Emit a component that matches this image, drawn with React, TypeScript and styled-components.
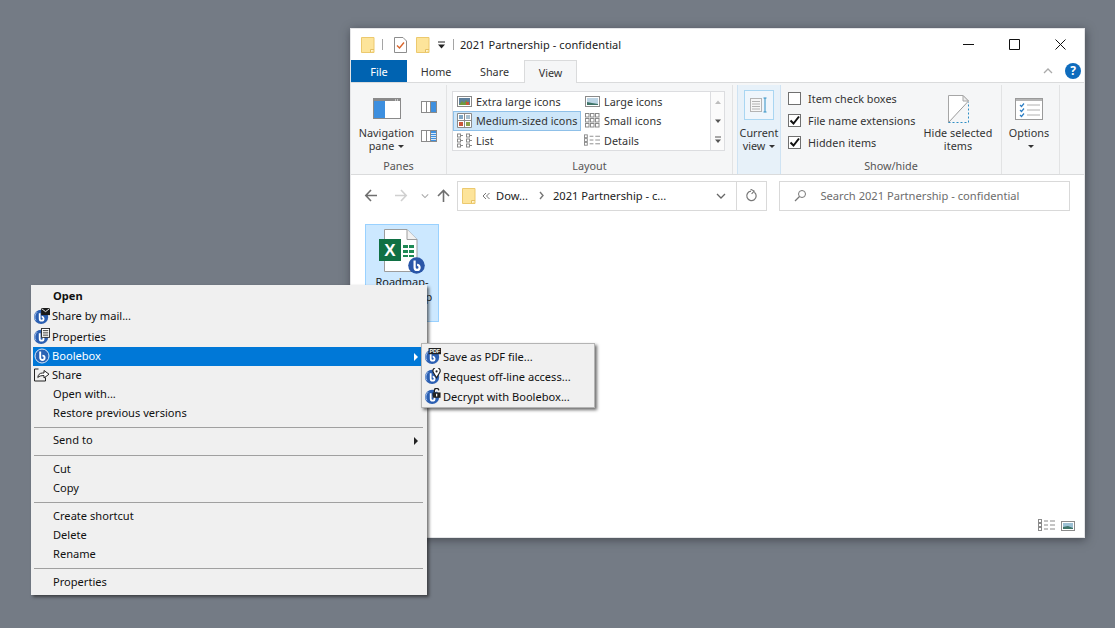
import React from 'react';
import styled, { createGlobalStyle } from 'styled-components';

const GlobalStyle = createGlobalStyle`
  html, body { margin: 0; padding: 0; background: #747b85; }
  body { font-family: "Noto Sans", "Open Sans", sans-serif; font-size: 11px; color: #1e1e1e; }
  * { box-sizing: border-box; }
`;

const Desktop = styled.div`
  position: relative;
  width: 1115px;
  height: 628px;
  overflow: hidden;
  background: #747b85;
`;

const ExplorerWindow = styled.div`
  position: absolute;
  left: 350px;
  top: 28px;
  width: 735px;
  height: 510px;
  display: flex;
  flex-direction: column;
  background: #fff;
  border: 1px solid #e4e5e7;
  box-shadow: 1px 2px 9px rgba(40, 44, 50, 0.6);
`;

const TitleBar = styled.div`
  height: 31px;
  display: flex;
  align-items: center;
  padding-left: 10px;
`;

const QuickSlot = styled.div<{ $ml: number }>`
  margin-left: ${(p) => p.$ml}px;
  display: flex;
  align-items: center;
`;

const TitleSep = styled.div<{ $ml: number }>`
  width: 1px;
  height: 11px;
  background: #a5a5a5;
  margin-left: ${(p) => p.$ml}px;
`;

const TitleText = styled.div`
  margin-left: 6px;
  font-size: 11px;
  color: #222;
  letter-spacing: 0.08px;
`;

const CaptionButtons = styled.div`
  margin-left: auto;
  display: flex;
  margin-right: 1px;
`;

const CaptionButton = styled.div`
  width: 46px;
  height: 31px;
  display: flex;
  align-items: center;
  justify-content: center;
`;

const TabRow = styled.div`
  height: 23px;
  display: flex;
  align-items: stretch;
  position: relative;
  z-index: 1;
  border-bottom: 1px solid #dadbdc;
`;

const FileTab = styled.div`
  width: 56px;
  display: flex;
  align-items: center;
  justify-content: center;
  background: #0063b1;
  color: #fff;
  font-size: 11px;
`;

const Tab = styled.div<{ $w: number; $active?: boolean }>`
  width: ${(p) => p.$w}px;
  display: flex;
  align-items: center;
  justify-content: center;
  font-size: 10.8px;
  color: #333;
  ${(p) =>
    p.$active &&
    `
    background: #f5f6f7;
    border: 1px solid #dadbdc;
    border-bottom: none;
    margin-bottom: -1px;
  `}
`;

const TabEnd = styled.div`
  margin-left: auto;
  display: flex;
  align-items: center;
  gap: 12px;
  padding-right: 3px;
`;

const HelpBadge = styled.div`
  width: 16px;
  height: 16px;
  border-radius: 50%;
  background: #0f6cbd;
  color: #fff;
  font-weight: 700;
  font-size: 12px;
  line-height: 16px;
  text-align: center;
`;

const Ribbon = styled.div`
  height: 92px;
  display: flex;
  background: #f5f6f7;
  border-bottom: 1px solid #dadbdc;
  padding: 2px 0 0;
`;

const Group = styled.div<{ $w: number; $last?: boolean }>`
  width: ${(p) => p.$w}px;
  display: flex;
  flex-direction: column;
  ${(p) => !p.$last && 'border-right: 1px solid #e2e3e4;'}
`;

const GroupBody = styled.div`
  flex: 1;
  display: flex;
  min-height: 0;
`;

const GroupLabel = styled.div`
  height: 17px;
  line-height: 17px;
  text-align: center;
  font-size: 10.8px;
  color: #555;
`;

const LargeButton = styled.div<{ $w: number }>`
  width: ${(p) => p.$w}px;
  display: flex;
  flex-direction: column;
  align-items: center;
  padding-top: 9px;
  font-size: 10.8px;
  line-height: 13px;
  text-align: center;
  color: #333;
  letter-spacing: 0.05px;
`;

const LargeButtonIcon = styled.div`
  height: 29px;
  display: flex;
  align-items: center;
  justify-content: center;
  margin-bottom: 3px;
`;

const Caret = styled.span`
  display: inline-block;
  width: 0;
  height: 0;
  margin-left: 4px;
  vertical-align: 2px;
  border-left: 3px solid transparent;
  border-right: 3px solid transparent;
  border-top: 3px solid #333;
`;

const PaneToggles = styled.div`
  display: flex;
  flex-direction: column;
  gap: 17px;
  padding-top: 16px;
  margin-left: -1px;
`;

const Gallery = styled.div`
  margin: 6px 0 0 5px;
  width: 259px;
  height: 60px;
  background: #fff;
  border: 1px solid #dcdde0;
  display: grid;
  grid-template-columns: 128px 1fr;
  grid-template-rows: repeat(3, 1fr);
`;

const GalleryItem = styled.div<{ $selected?: boolean }>`
  display: flex;
  align-items: center;
  gap: 4px;
  padding-left: 3px;
  font-size: 10.8px;
  color: #333;
  letter-spacing: 0.05px;
  white-space: nowrap;
  ${(p) => p.$selected && 'background: #cde6f9; border: 1px solid #8fc0e8; padding-left: 2px;'}
`;

const GalleryIcon = styled.div`
  width: 16px;
  display: flex;
  align-items: center;
  justify-content: center;
  flex: none;
`;

const GalleryScroll = styled.div`
  margin-top: 6px;
  width: 14px;
  height: 60px;
  background: #fbfbfb;
  border: 1px solid #dcdde0;
  border-left: none;
  display: flex;
  flex-direction: column;
`;

const ScrollCell = styled.div`
  height: 20px;
  display: flex;
  align-items: center;
  justify-content: center;
`;

const CurrentView = styled.div`
  width: 44px;
  margin-left: 4px;
  display: flex;
  flex-direction: column;
  align-items: center;
  padding-top: 5px;
  background: #e7f1f9;
  border: 1px solid #cfe3f3;
  border-width: 0 1px;
  font-size: 10.8px;
  line-height: 13px;
  text-align: center;
  color: #333;
  height: 89px;
`;

const CurrentViewIcon = styled.div`
  width: 30px;
  height: 30px;
  background: #eff6fc;
  border: 1px solid #a9d6f2;
  display: flex;
  align-items: center;
  justify-content: center;
  margin-bottom: 6px;
`;

const CheckColumn = styled.div`
  padding: 7px 0 0 7px;
  width: 139px;
  display: flex;
  flex-direction: column;
  gap: 9px;
`;

const CheckRow = styled.div`
  height: 13px;
  display: flex;
  align-items: center;
  gap: 7px;
  font-size: 10.8px;
  color: #333;
  letter-spacing: 0.05px;
  white-space: nowrap;
`;

const CheckBox = styled.div`
  width: 13px;
  height: 13px;
  background: #fff;
  border: 1px solid #707070;
  display: flex;
  align-items: center;
  justify-content: center;
`;

const AddressRow = styled.div`
  height: 41px;
  display: flex;
  align-items: center;
  padding: 0 14px 0 10px;
`;

const NavButtons = styled.div`
  width: 96px;
  display: flex;
  align-items: center;
`;

const NavCell = styled.div<{ $w: number }>`
  width: ${(p) => p.$w}px;
  display: flex;
  align-items: center;
  justify-content: center;
`;

const AddressBox = styled.div`
  width: 311px;
  height: 30px;
  border: 1px solid #d9d9d9;
  display: flex;
  align-items: center;
  padding-left: 4px;
  font-size: 11.15px;
  color: #222;
`;

const Crumb = styled.span<{ $ml: number }>`
  margin-left: ${(p) => p.$ml}px;
  white-space: nowrap;
  display: flex;
  align-items: center;
`;

const AddressEnd = styled.div`
  margin-left: auto;
  display: flex;
  align-items: center;
  height: 100%;
`;

const Dropdown = styled.div`
  width: 30px;
  display: flex;
  align-items: center;
  justify-content: center;
`;

const Refresh = styled.div`
  width: 30px;
  height: 100%;
  border-left: 1px solid #d9d9d9;
  display: flex;
  align-items: center;
  justify-content: center;
`;

const SearchBox = styled.div`
  margin-left: 12px;
  width: 291px;
  height: 30px;
  border: 1px solid #d9d9d9;
  display: flex;
  align-items: center;
  padding-left: 14px;
  gap: 13px;
  font-size: 11.15px;
  color: #6d6d6d;
`;

const FileArea = styled.div`
  flex: 1;
  padding: 8px 0 0 14px;
  position: relative;
`;

const FileTile = styled.div`
  width: 74px;
  height: 98px;
  background: #cce8ff;
  border: 1px solid #99d1ff;
  display: flex;
  flex-direction: column;
  align-items: center;
  padding-top: 3px;
  font-size: 11px;
  line-height: 15px;
  text-align: center;
  color: #222;
`;

const FileIconWrap = styled.div`
  height: 46px;
`;

const StatusIcons = styled.div`
  position: absolute;
  right: 9px;
  bottom: 5px;
  display: flex;
  align-items: center;
  gap: 6px;
`;

const ContextMenu = styled.div`
  position: absolute;
  left: 31px;
  top: 285px;
  width: 396px;
  height: 310px;
  padding: 1px 2px;
  background: #f0f0f0;
  box-shadow: 2px 2px 3px rgba(30, 30, 30, 0.65);
  font-size: 11.1px;
  color: #111;
`;

const SubMenu = styled.div`
  position: absolute;
  left: 421px;
  top: 343px;
  width: 174px;
  height: 65px;
  padding: 3px 1px;
  background: #f0f0f0;
  border: 1px solid #b4b4b4;
  box-shadow: 2px 2px 3px rgba(30, 30, 30, 0.65);
  font-size: 11.1px;
  color: #111;
`;

const MenuRow = styled.div<{ $h?: number; $hot?: boolean; $bold?: boolean }>`
  height: ${(p) => p.$h ?? 19}px;
  display: flex;
  align-items: center;
  position: relative;
  padding: 0 0 2px 20px;
  white-space: nowrap;
  ${(p) => p.$hot && 'background: #0078d7; color: #fff;'}
  ${(p) => p.$bold && 'font-weight: 700;'}
`;

const MenuIcon = styled.div`
  width: 18px;
  height: 17px;
  margin-left: -19px;
  display: flex;
  align-items: center;
  flex: none;
`;

const SubRow = styled.div`
  height: 20px;
  display: flex;
  align-items: center;
  padding: 0 0 2px 2px;
  gap: 2px;
  white-space: nowrap;
`;

const MenuSep = styled.div<{ $h?: number }>`
  height: ${(p) => p.$h ?? 9}px;
  display: flex;
  align-items: center;
  &::after {
    content: '';
    display: block;
    width: 100%;
    margin: 0 2px 0 1px;
    height: 1px;
    background: #a0a0a0;
  }
`;

const SubArrow = styled.span<{ $color: string }>`
  position: absolute;
  right: 7px;
  top: 50%;
  margin-top: -4px;
  width: 0;
  height: 0;
  border-top: 4px solid transparent;
  border-bottom: 4px solid transparent;
  border-left: 4px solid ${(p) => p.$color};
`;

const Folder = () => (
  <svg width="14" height="16" viewBox="0 0 14 16">
    <path d="M.5.5h12.5v15H.5z" fill="#fde49a" stroke="#ecc96e" />
    <path d="M9.5 15.5v-3h3.5" fill="#fff6d8" stroke="#e5c062" />
  </svg>
);

const ChecklistPage = () => (
  <svg width="13" height="16" viewBox="0 0 13 16">
    <path d="M.5.5h8.5l3.5 3.5v11.5H.5z" fill="#fff" stroke="#8d8d8d" />
    <path d="M3 8.5l2.5 2.5 4.5-5.5" fill="none" stroke="#d9642a" strokeWidth="1.4" />
  </svg>
);

const QuickDrop = () => (
  <svg width="7" height="8" viewBox="0 0 7 8">
    <path d="M0 1h7" stroke="#222" />
    <path d="M0 3.5h7L3.5 7.5z" fill="#222" />
  </svg>
);

const Minimize = () => <svg width="11" height="11"><path d="M0 5.5h11" stroke="#111" /></svg>;
const Maximize = () => <svg width="11" height="11"><path d="M.5.5h10v10H.5z" fill="none" stroke="#111" /></svg>;
const CloseX = () => <svg width="11" height="11"><path d="M.5.5l10 10M10.5.5l-10 10" stroke="#111" /></svg>;

const Chevron = ({ up = false, c = '#aaa', size = 10 }: { up?: boolean; c?: string; size?: number }) => (
  <svg width={size} height={size} viewBox="0 0 10 10">
    <path d={up ? 'M1 7l4-4 4 4' : 'M1 3l4 4 4-4'} fill="none" stroke={c} strokeWidth="1.3" />
  </svg>
);

const CrumbDouble = () => (
  <svg width="8" height="8" viewBox="0 0 8 8">
    <path d="M4 1L1 4l3 3M7.5 1l-3 3 3 3" fill="none" stroke="#777" />
  </svg>
);

const CrumbNext = () => (
  <svg width="5" height="9" viewBox="0 0 5 9">
    <path d="M1 1l3 3.5L1 8" fill="none" stroke="#777" strokeWidth="1.4" />
  </svg>
);

const NavPaneIcon = () => (
  <svg width="28" height="21" viewBox="0 0 28 21">
    <rect x=".5" y=".5" width="27" height="20" fill="#fff" stroke="#8a8a8a" />
    <rect x="1" y="3" width="11" height="17" fill="#3d8fdf" />
    <rect x="1" y="1" width="26" height="2" fill="#8a8a8a" />
    <path d="M22 2h1M24 2h1" stroke="#fff" />
  </svg>
);

const PreviewPaneIcon = ({ details = false }: { details?: boolean }) => (
  <svg width="16" height="12" viewBox="0 0 16 12">
    <rect x=".5" y=".5" width="15" height="11" fill="#fff" stroke="#8a8a8a" />
    <path d="M5.5 1v10M9.5 1v10" stroke="#8a8a8a" />
    <rect x="10" y="1" width="5" height="10" fill="#3d8fdf" />
    {details && <path d="M10 3.5h5M10 5.5h5M10 7.5h5M10 9.5h5" stroke="#d6e8f8" />}
  </svg>
);

const PhotoIcon = ({ w, tone }: { w: number; tone: 'warm' | 'cool' }) => (
  <svg width={w} height="11" viewBox={`0 0 ${w} 11`}>
    <rect x=".5" y=".5" width={w - 1} height="10" fill="#fff" stroke="#8a8a8a" />
    {tone === 'warm' ? (
      <>
        <rect x="2" y="2" width={w - 4} height="7" fill="#5e7f9c" />
        <path d={`M2 9l3-4 2 2 2-3 ${w - 11} 5z`} fill="#6f9a3c" />
        <rect x="9" y="6" width="3" height="3" fill="#c9553a" />
      </>
    ) : (
      <>
        <rect x="2" y="2" width={w - 4} height="7" fill="#bcd4e4" />
        <path d={`M2 9V6l5 1 ${w - 9} 1v1z`} fill="#3f7468" />
      </>
    )}
  </svg>
);

const MediumIcon = () => (
  <svg width="15" height="15" viewBox="0 0 15 15">
    <path d="M.5.5h14v14H.5zM.5 7.5h14M7.5.5v14" fill="#fff" stroke="#8a8a8a" />
    <rect x="2" y="2" width="4" height="4" fill="#7fa6c4" />
    <rect x="9" y="2" width="4" height="4" fill="#a7bfcf" />
    <rect x="2" y="9" width="4" height="4" fill="#c9553a" />
    <rect x="9" y="9" width="4" height="4" fill="#8aa048" />
  </svg>
);

const SmallIconsIcon = () => (
  <svg width="15" height="15" viewBox="0 0 15 15">
    {[0, 5, 10].map((y) =>
      [0, 5, 10].map((x) => (
        <rect key={`${x}-${y}`} x={x + 0.5} y={y + 0.5} width="3.5" height="3.5" fill="#fff" stroke="#8a8a8a" />
      )),
    )}
  </svg>
);

const ListIcon = () => (
  <svg width="15" height="15" viewBox="0 0 15 15">
    {[1, 6, 11].map((y) =>
      [0.5, 9.5].map((x) => (
        <g key={`${x}-${y}`}>
          <rect x={x} y={y} width="3" height="3" fill="#fff" stroke="#8a8a8a" />
          <path d={`M${x + 3.5} ${y + 1.5}h2`} stroke="#8a8a8a" />
        </g>
      )),
    )}
  </svg>
);

const DetailsIcon = () => (
  <svg width="17" height="13" viewBox="0 0 17 13">
    {[0.5, 4.5, 8.5].map((y) => (
      <g key={y}>
        <rect x=".5" y={y} width="3" height="3" fill="#fff" stroke="#8a8a8a" />
        <path d={`M6 ${y + 1.5}h4M12 ${y + 1.5}h5`} stroke="#8a8a8a" />
      </g>
    ))}
  </svg>
);

const ScrollGlyph = ({ kind }: { kind: 'up' | 'down' | 'more' }) => (
  <svg width="8" height="8" viewBox="0 0 8 8">
    {kind === 'up' && <path d="M1 6h6L4 2.5z" fill="#bdbdbd" />}
    {kind === 'down' && <path d="M1 2.5h6L4 6z" fill="#555" />}
    {kind === 'more' && (
      <>
        <path d="M1 1h6" stroke="#555" />
        <path d="M1 3.5h6L4 7z" fill="#555" />
      </>
    )}
  </svg>
);

const CurrentViewGlyph = () => (
  <svg width="18" height="16" viewBox="0 0 18 16">
    <rect x=".5" y="1.5" width="11" height="13" fill="#f7f7f7" stroke="#b4b4b4" />
    <path d="M2 4.5h8M2 7h8M2 9.5h8M2 12h8" stroke="#b4b4b4" />
    <path d="M15 1v14M13.5 1h3M13.5 15h3" stroke="#2e8fc4" fill="none" />
  </svg>
);

const Tick = () => (
  <svg width="11" height="11" viewBox="0 0 11 11">
    <path d="M1.5 5.5l3 3 5.5-7" fill="none" stroke="#111" strokeWidth="2" />
  </svg>
);

const HideItemsIcon = () => (
  <svg width="21" height="28" viewBox="0 0 21 28">
    <path d="M.5 27.5V.5H15l5.5 5.5" fill="#fff" stroke="#a6a6a6" />
    <path d="M15 .5V6h5.5z" fill="#eee" stroke="#a6a6a6" />
    <path d="M.5 27.5L20.5 6" stroke="#9a9a9a" fill="none" />
    <path d="M.5 27.5h20V7" fill="none" stroke="#2e8fc4" strokeDasharray="2 2" />
  </svg>
);

const OptionsIcon = () => (
  <svg width="28" height="22" viewBox="0 0 28 22">
    <rect x=".5" y=".5" width="27" height="21" fill="#fff" stroke="#9a9a9a" />
    <rect x="1" y="1" width="26" height="2" fill="#b5b5b5" />
    <path d="M12 7h13M12 12h13M12 17h13" stroke="#b0b0b0" />
    <path d="M5 7l1.5 1.5L9 5.5M5 12l1.5 1.5L9 10.5M5 17l1.5 1.5L9 15.5" fill="none" stroke="#2e7fc4" strokeWidth="1.2" />
  </svg>
);

const NavArrow = ({ dir, c }: { dir: 'left' | 'right' | 'up'; c: string }) => {
  const d = {
    left: 'M13 7.5H2M7 2L1.8 7.5 7 13',
    right: 'M1 7.5h11M7 2l5.2 5.5L7 13',
    up: 'M7.5 14V3M2 8l5.5-5.5L13 8',
  }[dir];
  return (
    <svg width="14" height="15" viewBox="0 0 14 15">
      <path d={d} fill="none" stroke={c} strokeWidth="1.6" />
    </svg>
  );
};

const RefreshIcon = () => (
  <svg width="13" height="13" viewBox="0 0 13 13">
    <path d="M9.4 3.2a4.7 4.7 0 1 1-3.4-1" fill="none" stroke="#777" strokeWidth="1.2" />
    <path d="M5.6 .2l3.6 1.9-2.6 2.8" fill="none" stroke="#777" strokeWidth="1.1" />
  </svg>
);

const SearchIcon = () => (
  <svg width="13" height="13" viewBox="0 0 13 13">
    <circle cx="8" cy="5" r="3.5" fill="none" stroke="#777" />
    <path d="M5.5 7.5L1 12" stroke="#777" strokeWidth="1.2" />
  </svg>
);

const HotLogo = () => (
  <svg width="16" height="16" viewBox="0 0 16 16">
    <circle cx="8" cy="8" r="7" fill="#2a63b4" stroke="#dbe8f7" />
    <path d="M6.2 3.6v6.2a2.2 2.2 0 1 0 2.2-2.2" fill="none" stroke="#fff" strokeWidth="1.9" />
  </svg>
);

const BadgeIcon = ({ badge }: { badge: React.ReactNode }) => (
  <svg width="16" height="16" viewBox="0 0 18 18">
    <circle cx="8" cy="10" r="8" fill="#2b5fb2" />
    <path d="M2.2 14A7 7 0 0 1 3.6 4.6" fill="none" stroke="#a8c5ee" strokeWidth="1" />
    <path d="M6.4 6v6a2.2 2.2 0 1 0 2.2-2.2" fill="none" stroke="#fff" strokeWidth="2" />
    {badge}
  </svg>
);

const mailBadge = (
  <>
    <rect x="8" y="0" width="10" height="8" fill="#1a1a1a" />
    <path d="M8.5 .7l4.5 3.4 4.5-3.4" fill="none" stroke="#fff" strokeWidth="1" />
  </>
);
const propsBadge = (
  <>
    <rect x="8.5" y=".5" width="9" height="10" fill="#fff" stroke="#222" />
    <path d="M10 3h6M10 5.5h6M10 8h6" stroke="#222" />
  </>
);
const pdfBadge = (
  <>
    <rect x="4" y="0" width="14" height="7" fill="#222" />
    <text x="11" y="6" textAnchor="middle" fontSize="6" fontWeight="700" fontFamily="Liberation Sans, sans-serif" fill="#fff">PDF</text>
  </>
);
const pinBadge = (
  <>
    <path d="M13 11L9.6 5.4a4 4 0 1 1 6.8 0z" fill="#fff" stroke="#222" strokeWidth="1.3" />
    <circle cx="13" cy="3.8" r="1.2" fill="#222" />
  </>
);
const lockBadge = (
  <>
    <path d="M10.5 5V2.9a2.5 2.5 0 0 1 5-.2" fill="#f0f0f0" stroke="#222" strokeWidth="1.5" />
    <rect x="8.5" y="5" width="9" height="6" fill="#222" />
    <rect x="12.4" y="6.5" width="1.4" height="3" fill="#fff" />
  </>
);

const ShareIcon = () => (
  <svg width="16" height="14" viewBox="0 0 16 14">
    <path d="M10 5H8.5C5.5 5 4 7 3.8 9.5 5.2 8 7 7.6 10 7.6V10l5-3.8L10 2.5z" fill="#fff" stroke="#222" strokeLinejoin="round" />
    <path d="M4.5 1.5h-4v12h11V10" fill="none" stroke="#222" transform="translate(0 -.5)" />
  </svg>
);

const ExcelFileIcon = () => (
  <svg width="47" height="47" viewBox="0 0 47 47">
    <path d="M5.5 1.5H28l10 10v32H5.5z" fill="#fff" stroke="#9c9c9c" />
    <path d="M28 1.5v10h10" fill="#f2f2f2" stroke="#9c9c9c" />
    <rect x="0" y="11" width="22" height="22" fill="#107044" />
    <text x="11" y="28" textAnchor="middle" fontSize="17" fontWeight="700" fontFamily="Liberation Sans, sans-serif" fill="#fff">X</text>
    <path d="M24 17h5v3h-5zM30 17h5v3h-5zM24 22h5v3h-5zM30 22h5v3h-5zM24 27h5v2h-5zM30 27h5v2h-5z" fill="#1f8a55" />
    <g transform="translate(29 29)">
      <circle cx="8.5" cy="8.5" r="8.3" fill="#2a56a8" />
      <path d="M6.6 3.4v7a2.5 2.5 0 1 0 2.5-2.5" fill="none" stroke="#fff" strokeWidth="2.2" />
    </g>
  </svg>
);

const StatusPhoto = () => (
  <svg width="14" height="10" viewBox="0 0 14 10">
    <rect x=".5" y=".5" width="13" height="9" fill="#fff" stroke="#8a8a8a" />
    <rect x="2" y="2" width="10" height="6" fill="#9cc0d4" />
    <path d="M2 8V6l5-1 5 2v1z" fill="#3f7468" />
  </svg>
);

const App: React.FC = () => (
  <>
    <GlobalStyle />
    <Desktop>
      <ExplorerWindow>
        <TitleBar>
          <QuickSlot $ml={0}><Folder /></QuickSlot>
          <TitleSep $ml={7} />
          <QuickSlot $ml={11}><ChecklistPage /></QuickSlot>
          <QuickSlot $ml={9}><Folder /></QuickSlot>
          <QuickSlot $ml={8}><QuickDrop /></QuickSlot>
          <TitleSep $ml={8} />
          <TitleText>2021 Partnership - confidential</TitleText>
          <CaptionButtons>
            <CaptionButton><Minimize /></CaptionButton>
            <CaptionButton><Maximize /></CaptionButton>
            <CaptionButton><CloseX /></CaptionButton>
          </CaptionButtons>
        </TitleBar>
        <TabRow>
          <FileTab>File</FileTab>
          <Tab $w={58}>Home</Tab>
          <Tab $w={59}>Share</Tab>
          <Tab $w={53} $active>View</Tab>
          <TabEnd>
            <Chevron up />
            <HelpBadge>?</HelpBadge>
          </TabEnd>
        </TabRow>
        <Ribbon>
          <Group $w={96}>
            <GroupBody>
              <LargeButton $w={71}>
                <LargeButtonIcon><NavPaneIcon /></LargeButtonIcon>
                Navigation
                <span>pane<Caret /></span>
              </LargeButton>
              <PaneToggles>
                <PreviewPaneIcon />
                <PreviewPaneIcon details />
              </PaneToggles>
            </GroupBody>
            <GroupLabel>Panes</GroupLabel>
          </Group>
          <Group $w={286}>
            <GroupBody>
              <Gallery>
                <GalleryItem><GalleryIcon><PhotoIcon w={15} tone="warm" /></GalleryIcon>Extra large icons</GalleryItem>
                <GalleryItem><GalleryIcon><PhotoIcon w={15} tone="cool" /></GalleryIcon>Large icons</GalleryItem>
                <GalleryItem $selected><GalleryIcon><MediumIcon /></GalleryIcon>Medium-sized icons</GalleryItem>
                <GalleryItem><GalleryIcon><SmallIconsIcon /></GalleryIcon>Small icons</GalleryItem>
                <GalleryItem><GalleryIcon><ListIcon /></GalleryIcon>List</GalleryItem>
                <GalleryItem><GalleryIcon><DetailsIcon /></GalleryIcon>Details</GalleryItem>
              </Gallery>
              <GalleryScroll>
                <ScrollCell><ScrollGlyph kind="up" /></ScrollCell>
                <ScrollCell><ScrollGlyph kind="down" /></ScrollCell>
                <ScrollCell><ScrollGlyph kind="more" /></ScrollCell>
              </GalleryScroll>
            </GroupBody>
            <GroupLabel>Layout</GroupLabel>
          </Group>
          <CurrentView>
            <CurrentViewIcon><CurrentViewGlyph /></CurrentViewIcon>
            Current
            <span>view<Caret /></span>
          </CurrentView>
          <Group $w={221}>
            <GroupBody>
              <CheckColumn>
                <CheckRow><CheckBox />Item check boxes</CheckRow>
                <CheckRow><CheckBox><Tick /></CheckBox>File name extensions</CheckRow>
                <CheckRow><CheckBox><Tick /></CheckBox>Hidden items</CheckRow>
              </CheckColumn>
              <LargeButton $w={76}>
                <LargeButtonIcon><HideItemsIcon /></LargeButtonIcon>
                Hide selected
                <span>items</span>
              </LargeButton>
            </GroupBody>
            <GroupLabel>Show/hide</GroupLabel>
          </Group>
          <Group $w={58}>
            <GroupBody>
              <LargeButton $w={54}>
                <LargeButtonIcon><OptionsIcon /></LargeButtonIcon>
                Options
                <span><Caret /></span>
              </LargeButton>
            </GroupBody>
          </Group>
        </Ribbon>
        <AddressRow>
          <NavButtons>
            <NavCell $w={20}><NavArrow dir="left" c="#6f6f6f" /></NavCell>
            <NavCell $w={40}><NavArrow dir="right" c="#d0d0d0" /></NavCell>
            <NavCell $w={8}><Chevron c="#a8a8a8" size={8} /></NavCell>
            <NavCell $w={28}><NavArrow dir="up" c="#6f6f6f" /></NavCell>
          </NavButtons>
          <AddressBox>
            <Folder />
            <Crumb $ml={6}><CrumbDouble /></Crumb>
            <Crumb $ml={6}>Dow...</Crumb>
            <Crumb $ml={11}><CrumbNext /></Crumb>
            <Crumb $ml={9}>2021 Partnership - c...</Crumb>
            <AddressEnd>
              <Dropdown><Chevron c="#666" /></Dropdown>
              <Refresh><RefreshIcon /></Refresh>
            </AddressEnd>
          </AddressBox>
          <SearchBox>
            <SearchIcon />
            Search 2021 Partnership - confidential
          </SearchBox>
        </AddressRow>
        <FileArea>
          <FileTile>
            <FileIconWrap><ExcelFileIcon /></FileIconWrap>
            <span>Roadmap-</span>
            <span>Partnership</span>
          </FileTile>
          <StatusIcons>
            <DetailsIcon />
            <StatusPhoto />
          </StatusIcons>
        </FileArea>
      </ExplorerWindow>

      <ContextMenu>
        <MenuRow $h={20} $bold>Open</MenuRow>
        <MenuRow $h={21}><MenuIcon><BadgeIcon badge={mailBadge} /></MenuIcon>Share by mail...</MenuRow>
        <MenuRow $h={20}><MenuIcon><BadgeIcon badge={propsBadge} /></MenuIcon>Properties</MenuRow>
        <MenuRow $hot>
          <MenuIcon><HotLogo /></MenuIcon>Boolebox
          <SubArrow $color="#fff" />
        </MenuRow>
        <MenuRow><MenuIcon><ShareIcon /></MenuIcon>Share</MenuRow>
        <MenuRow>Open with...</MenuRow>
        <MenuRow>Restore previous versions</MenuRow>
        <MenuSep $h={8} />
        <MenuRow>
          Send to
          <SubArrow $color="#222" />
        </MenuRow>
        <MenuSep $h={10} />
        <MenuRow>Cut</MenuRow>
        <MenuRow>Copy</MenuRow>
        <MenuSep />
        <MenuRow>Create shortcut</MenuRow>
        <MenuRow>Delete</MenuRow>
        <MenuRow>Rename</MenuRow>
        <MenuSep />
        <MenuRow>Properties</MenuRow>
      </ContextMenu>

      <SubMenu>
        <SubRow><BadgeIcon badge={pdfBadge} />Save as PDF file...</SubRow>
        <SubRow><BadgeIcon badge={pinBadge} />Request off-line access...</SubRow>
        <SubRow><BadgeIcon badge={lockBadge} />Decrypt with Boolebox...</SubRow>
      </SubMenu>
    </Desktop>
  </>
);

export default App;
